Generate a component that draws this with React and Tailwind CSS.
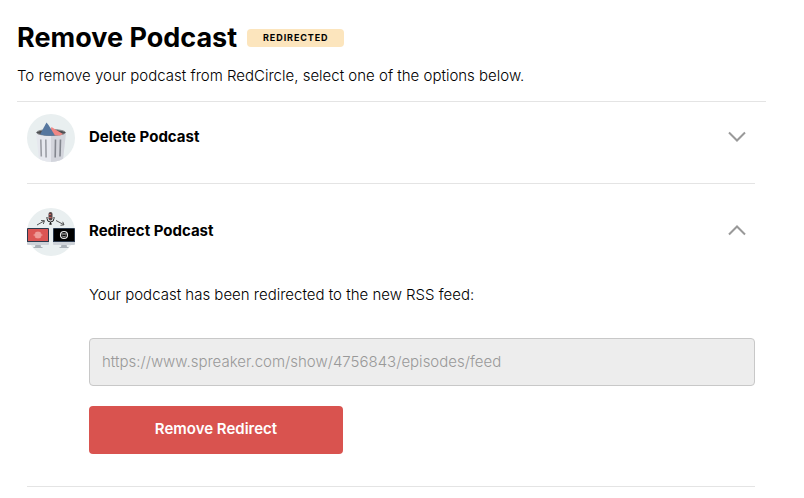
import { useState } from 'react'

function TrashIcon() {
  return (
    <svg className="w-12 h-12 shrink-0" viewBox="0 0 48 48" fill="none" aria-hidden="true">
      <clipPath id="trash-clip"><circle cx="24" cy="24" r="24" /></clipPath>
      <circle cx="24" cy="24" r="24" fill="#e9eff0" />
      <g clipPath="url(#trash-clip)">
        <path d="M9 18.500l3 27.500c5 3 19 3 24 0l3-27.500z" fill="#e6e8ee" />
        <path d="M24 18.500h15l-3 27.500c-3 1.500-7 2-12 2z" fill="#d3d5dc" />
        <ellipse cx="24" cy="18.500" rx="14.500" ry="3" fill="#4f4f52" stroke="#85898c" />
        <path d="M22 21l2.500-8 2 1.200 3.500 2.300 6 3.500-3 1.500z" fill="#f08784" />
        <path d="M13 20.500l6.500-12 2 2.500 6.500 10.500c-5 .5-10 .3-15-1z" fill="#56779f" />
        <path d="M13.800 25.500l.5 17M18.800 25.500l.3 18" stroke="#9a9da4" strokeWidth="1.600" />
        <path d="M28.500 25.500l-.3 18M33.500 25.500l-.5 17" stroke="#83868e" strokeWidth="1.600" />
      </g>
    </svg>
  )
}

function RedirectIcon() {
  return (
    <svg className="w-12 h-12 shrink-0" viewBox="0 0 48 48" fill="none" aria-hidden="true">
      <circle cx="24" cy="24" r="24" fill="#e9eff0" />
      {/* microphone */}
      <rect x="21.500" y="4" width="4" height="8.500" rx="2" fill="#574344" />
      <path d="M22 6.500h2M22 9.500h2.500" stroke="#c9605c" />
      <path d="M20 9v1.500a3.500 3.500 0 007 0V9M23.500 14v2.500M22 16h3" stroke="#222" />
      {/* arrows */}
      <path d="M10 17l7-4M14 12.500l3.500.2-1.200 3.300M29 12.500l7.500 4M33.500 17.300l3.500-.5-1.300-3" stroke="#444" strokeWidth=".9" />
      {/* old host */}
      <path d="M8.500 36h5l.5 3h1.500v1h-9v-1H8z" fill="#aab1b8" />
      <rect x="0" y="20" width="22" height="17" rx="1" fill="#cdd2d8" />
      <path d="M0 21a1 1 0 011-1h20a1 1 0 011 1v13H0z" fill="#2c3a4d" />
      <rect x="1" y="21" width="20" height="12" fill="#dc5553" />
      <circle cx="11" cy="27" r="3.500" fill="#ec8c88" />
      <path d="M6.500 27h9M8.500 25h5M8.500 29h5" stroke="#f3b3b0" strokeWidth=".8" />
      {/* new host */}
      <path d="M34.500 36h5l.5 3h1.500v1h-9v-1H34z" fill="#aab1b8" />
      <rect x="26" y="20" width="22" height="17" rx="1" fill="#cdd2d8" />
      <path d="M26 21a1 1 0 011-1h20a1 1 0 011 1v13H26z" fill="#2c3a4d" />
      <rect x="27" y="21" width="20" height="12" fill="#000" />
      <circle cx="37" cy="27" r="3.500" stroke="#e8e8e8" strokeWidth="1.200" />
      <path d="M34.500 26h5M35.300 28c1 1.200 2.400 1.200 3.400 0" stroke="#e8e8e8" strokeWidth=".9" />
    </svg>
  )
}

function Chevron({ open }) {
  return (
    <svg className="w-5 h-5 shrink-0" viewBox="0 0 20 20" fill="none" stroke="#999" strokeWidth="2" aria-hidden="true">
      <path d={open ? 'M2 12.500l8-8 8 8' : 'M2 4.500l8 8 8-8'} />
    </svg>
  )
}

function OptionHeader({ icon, title, open, onClick }) {
  return (
    <button type="button" aria-expanded={open} onClick={onClick} className="flex w-full items-center pr-2 text-left">
      {icon}
      <span className="ml-3.5 flex-1 pb-0.5 text-[15px] leading-6 font-bold">{title}</span>
      <Chevron open={open} />
    </button>
  )
}

export default function App() {
  const [openDelete, setOpenDelete] = useState(false)
  const [openRedirect, setOpenRedirect] = useState(true)

  return (
    <main className="bg-white pt-5 pr-[38px] pl-[17px] font-['Inter',sans-serif] text-[15px] leading-6 text-black">
      <header className="border-b border-[#e4e4e4] pb-[13px]">
        <div className="flex items-center">
          <h1 className="text-[27px] leading-9 font-bold">Remove Podcast</h1>
          <span className="ml-2.5 rounded bg-[#fce5bd] px-4 text-[9px] leading-[18px] font-bold tracking-widest">REDIRECTED</span>
        </div>
        <p className="mt-2 font-light">To remove your podcast from RedCircle, select one of the options below.</p>
      </header>

      <div className="mr-[11px] ml-2.5">
        <section className="border-b border-[#e4e4e4] pt-3 pb-[21px]">
          <OptionHeader icon={<TrashIcon />} title="Delete Podcast" open={openDelete} onClick={() => setOpenDelete(!openDelete)} />
        </section>

        <section className="border-b border-[#e4e4e4] pt-6 pb-8">
          <OptionHeader icon={<RedirectIcon />} title="Redirect Podcast" open={openRedirect} onClick={() => setOpenRedirect(!openRedirect)} />
          {openRedirect ? (
            <div className="mt-[27px] ml-[62px]">
              <label htmlFor="feed" className="block font-light">Your podcast has been redirected to the new RSS feed:</label>
              <input
                id="feed"
                type="text"
                disabled
                value="https://www.spreaker.com/show/4756843/episodes/feed"
                className="mt-[31px] block h-12 w-full rounded border border-[#c8c8c8] bg-[#ededed] px-3 pb-0.5 font-light text-[#999]"
              />
              <button type="button" className="mt-5 block h-12 w-[254px] rounded bg-[#d9534f] pb-0.5 font-semibold text-white">Remove Redirect</button>
            </div>
          ) : null}
        </section>
      </div>
    </main>
  )
}
